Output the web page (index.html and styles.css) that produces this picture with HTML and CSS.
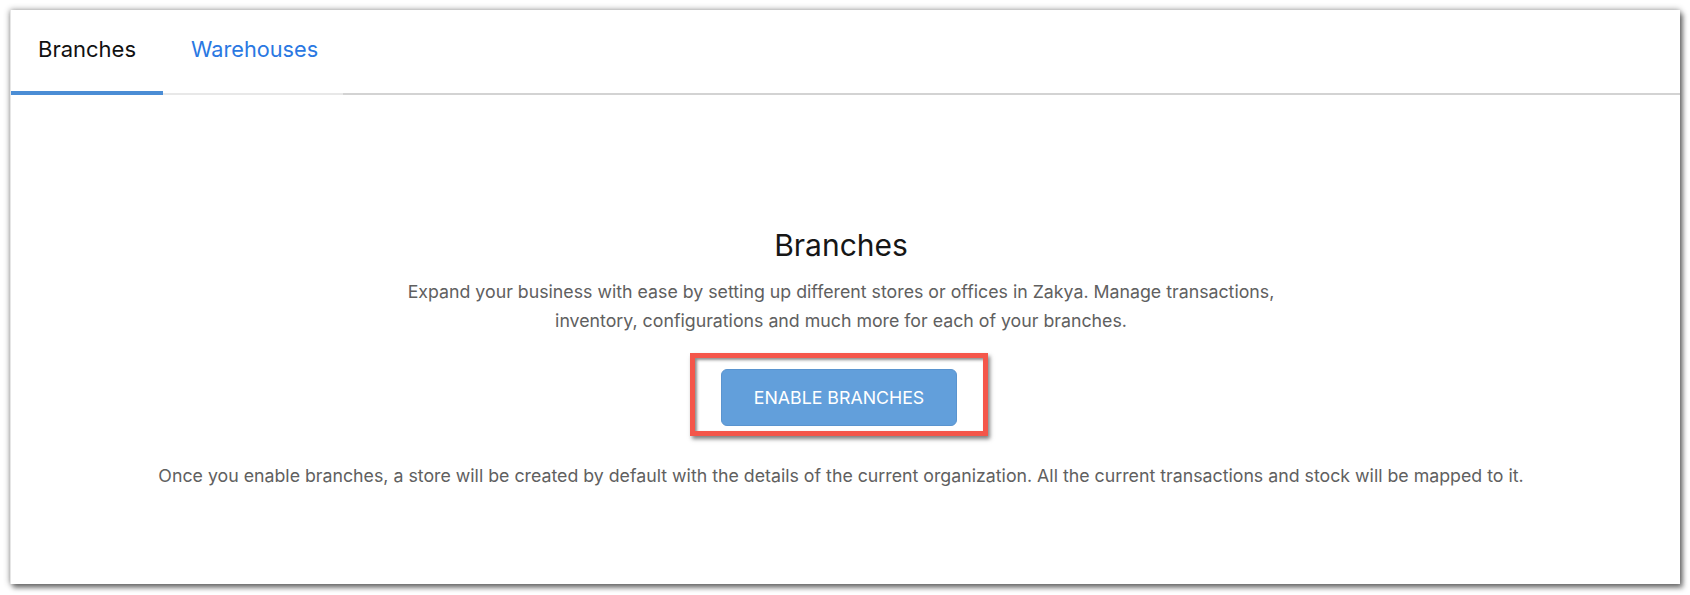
FILE: index.html
```html
<!DOCTYPE html>
<html lang="en">
<head>
<meta charset="utf-8">
<title>Branches</title>
<link rel="stylesheet" href="styles.css">
</head>
<body>
<div class="card">
  <div class="tabs">
    <div class="tab tab-active">Branches</div>
    <div class="tab tab-link">Warehouses</div>
  </div>
  <div class="content">
    <h1 class="title">Branches</h1>
    <p class="desc">Expand your business with ease by setting up different stores or offices in Zakya. Manage transactions,<br>inventory, configurations and much more for each of your branches.</p>
    <div class="highlight">
      <button class="btn">ENABLE BRANCHES</button>
    </div>
    <p class="note">Once you enable branches, a store will be created by default with the details of the current organization. All the current transactions and stock will be mapped to it.</p>
  </div>
</div>
</body>
</html>
```

FILE: styles.css
```css
* { box-sizing: border-box; }
html, body { margin: 0; padding: 0; background: #ffffff; }
body {
  padding: 10px;
  font-family: Inter, "Noto Sans", "Liberation Sans", sans-serif;
}
.card {
  width: 1670px;
  height: 574px;
  background: #ffffff;
  border-left: 1px solid #e6e6e6;
  box-shadow: 0 0 6px rgba(0,0,0,0.45), 3px 4px 5px rgba(0,0,0,0.45);
  display: flex;
  flex-direction: column;
}
.tabs {
  display: flex;
  height: 85px;
  border-bottom: 2px solid #d3d3d3;
}
.tab {
  display: flex;
  align-items: center;
  padding: 0 26px 6px 27px;
  font-size: 22px;
  margin-bottom: -2px;
  height: 85px;
}
.tab-active {
  color: #111111;
  border-bottom: 4px solid #4b8dd5;
  padding-bottom: 4px;
  width: 152px;
}
.tab-link {
  color: #2a78e2;
  border-bottom: 2px solid #e8e8e8;
  width: 180px;
  padding-left: 28px;
  font-size: 21.7px;
}
.content {
  flex: 1;
  display: flex;
  flex-direction: column;
  align-items: center;
  padding: 132px 9px 0 0;
}
.title {
  margin: 0;
  font-size: 30px;
  line-height: 37px;
  font-weight: 400;
  color: #161616;
}
.desc {
  margin: 13px 0 0;
  font-size: 17.75px;
  line-height: 29px;
  color: #606060;
  text-align: center;
}
.highlight {
  margin: 18px 4px 0 0;
  border: 5px solid #f4564a;
  padding: 11px 26px 5px 26px;
  background: #ffffff;
  box-shadow: inset 2px 2px 3px rgba(0,0,0,0.45), 2px 3px 4px rgba(0,0,0,0.5);
}
.btn {
  display: block;
  width: 236px;
  height: 57px;
  background: #629fdb;
  border: 1px solid #5a94cf;
  border-radius: 6px;
  color: #ffffff;
  font-family: Inter, "Noto Sans", "Liberation Sans", sans-serif;
  font-size: 17.75px;
  font-weight: 400;
  padding: 0;
}
.note {
  margin: 25px 0 0;
  font-size: 17.75px;
  line-height: 29px;
  color: #606060;
  text-align: center;
}
```
